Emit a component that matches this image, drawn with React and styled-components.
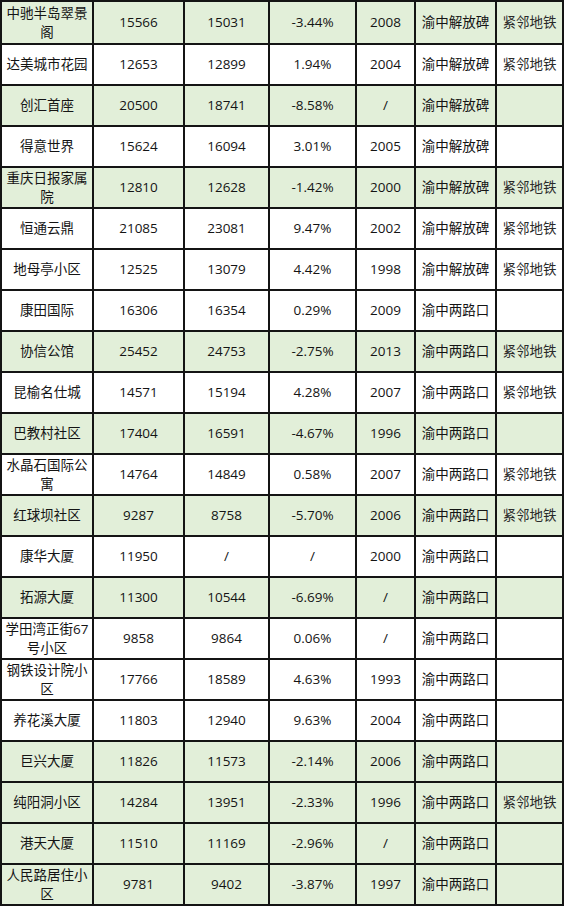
import React from 'react';
import styled, { createGlobalStyle } from 'styled-components';

const GlobalStyle = createGlobalStyle`
  body {
    margin: 0;
    background: #ffffff;
  }
`;

const Table = styled.table`
  border-collapse: collapse;
  table-layout: fixed;
  width: 564px;
  border: 2px solid #141414;
  font-family: "Open Sans", "Noto Sans CJK SC", sans-serif;
  font-size: 13.5px;
  line-height: 19px;
  color: #141414;
`;

const Row = styled.tr`
  height: ${({ $first }) => ($first ? '43px' : '41px')};
  background: ${({ $green }) => ($green ? '#e2efd9' : '#ffffff')};
`;

const Cell = styled.td`
  border: 2px solid #141414;
  padding: 0 2px;
  text-align: center;
  vertical-align: middle;
  word-break: break-all;
  color: ${({ $muted }) => ($muted ? '#2a2a2a' : 'inherit')};
`;

const widths = [92, 91, 85, 87, 59, 81, 67];

const rows = [
  ['中驰半岛翠景阁', '15566', '15031', '-3.44%', '2008', '渝中解放碑', '紧邻地铁', true],
  ['达美城市花园', '12653', '12899', '1.94%', '2004', '渝中解放碑', '紧邻地铁', false],
  ['创汇首座', '20500', '18741', '-8.58%', '/', '渝中解放碑', '', true],
  ['得意世界', '15624', '16094', '3.01%', '2005', '渝中解放碑', '', false],
  ['重庆日报家属院', '12810', '12628', '-1.42%', '2000', '渝中解放碑', '紧邻地铁', true],
  ['恒通云鼎', '21085', '23081', '9.47%', '2002', '渝中解放碑', '紧邻地铁', false],
  ['地母亭小区', '12525', '13079', '4.42%', '1998', '渝中解放碑', '紧邻地铁', false],
  ['康田国际', '16306', '16354', '0.29%', '2009', '渝中两路口', '', false],
  ['协信公馆', '25452', '24753', '-2.75%', '2013', '渝中两路口', '紧邻地铁', true],
  ['昆榆名仕城', '14571', '15194', '4.28%', '2007', '渝中两路口', '紧邻地铁', false],
  ['巴教村社区', '17404', '16591', '-4.67%', '1996', '渝中两路口', '', true],
  ['水晶石国际公寓', '14764', '14849', '0.58%', '2007', '渝中两路口', '紧邻地铁', false],
  ['红球坝社区', '9287', '8758', '-5.70%', '2006', '渝中两路口', '紧邻地铁', true],
  ['康华大厦', '11950', '/', '/', '2000', '渝中两路口', '', false],
  ['拓源大厦', '11300', '10544', '-6.69%', '/', '渝中两路口', '', true],
  ['学田湾正街67号小区', '9858', '9864', '0.06%', '/', '渝中两路口', '', false],
  ['钢铁设计院小区', '17766', '18589', '4.63%', '1993', '渝中两路口', '', false],
  ['养花溪大厦', '11803', '12940', '9.63%', '2004', '渝中两路口', '', false],
  ['巨兴大厦', '11826', '11573', '-2.14%', '2006', '渝中两路口', '', true],
  ['纯阳洞小区', '14284', '13951', '-2.33%', '1996', '渝中两路口', '紧邻地铁', true],
  ['港天大厦', '11510', '11169', '-2.96%', '/', '渝中两路口', '', true],
  ['人民路居住小区', '9781', '9402', '-3.87%', '1997', '渝中两路口', '', true],
];

export default function App() {
  return (
    <>
      <GlobalStyle />
      <Table>
        <colgroup>
          {widths.map((w, i) => (
            <col key={i} style={{ width: w }} />
          ))}
        </colgroup>
        <tbody>
          {rows.map((r, i) => (
            <Row key={i} $green={r[7]} $first={i === 0}>
              {r.slice(0, 7).map((v, j) => (
                <Cell key={j} $muted={j === 6}>
                  {v}
                </Cell>
              ))}
            </Row>
          ))}
        </tbody>
      </Table>
    </>
  );
}
